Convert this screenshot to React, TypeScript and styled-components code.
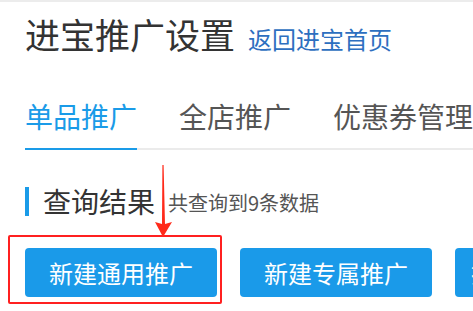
import styled, { createGlobalStyle } from 'styled-components'

const GlobalStyle = createGlobalStyle`
  html, body {
    margin: 0;
    padding: 0;
    background: #ffffff;
  }
  body {
    font-family: "Noto Sans CJK SC", "Noto Sans", sans-serif;
  }
`

const Page = styled.div`
  position: relative;
  width: 473px;
  height: 311px;
  overflow: hidden;
  border-top: 2px solid #ececec;
  box-sizing: border-box;
`

const Header = styled.div`
  align-items: baseline;
  display: flex;
  gap: 13px;
  padding: 12px 0 0 25px;
  white-space: nowrap;
`

const Title = styled.h1`
  color: #333333;
  font-size: 35px;
  font-weight: 400;
  line-height: 40px;
  margin: 0;
`

const BackLink = styled.a`
  color: #2d6fc0;
  cursor: pointer;
  font-size: 24px;
  line-height: 30px;
`

const Tabs = styled.div`
  border-bottom: 2px solid #ebebeb;
  display: flex;
  gap: 42px;
  margin: 45px 0 0 25px;
  white-space: nowrap;
`

const Tab = styled.div<{ $active?: boolean }>`
  border-bottom: 2px solid ${p => (p.$active ? '#1a9be8' : 'transparent')};
  color: ${p => (p.$active ? '#1a9be8' : '#555555')};
  cursor: pointer;
  font-size: 28px;
  line-height: 34px;
  margin-bottom: -2px;
  padding-bottom: 15px;
`

const Section = styled.div`
  align-items: center;
  display: flex;
  gap: 14px;
  margin: 35px 0 0 25px;
  white-space: nowrap;
`

const Marker = styled.span`
  align-self: stretch;
  background: #1a9be8;
  margin: 2px 0 1px;
  width: 4px;
`

const SectionTitle = styled.h2`
  color: #333333;
  font-size: 28px;
  font-weight: 400;
  line-height: 30px;
  margin: 0;
`

const Summary = styled.span`
  color: #555555;
  font-size: 20px;
  margin-left: -1px;
  padding-top: 3px;
`

const Actions = styled.div`
  display: flex;
  gap: 23px;
  margin: 31px 0 0 25px;
  white-space: nowrap;
`

const Highlight = styled.div`
  position: relative;

  &::after {
    border: 2px solid #ff2020;
    border-radius: 2px;
    box-sizing: border-box;
    content: '';
    height: 69px;
    left: -17px;
    pointer-events: none;
    position: absolute;
    top: -13px;
    width: 214px;
  }
`

const Button = styled.button<{ $compact?: boolean }>`
  background: #1a9ae9;
  border: none;
  border-radius: 4px;
  color: #ffffff;
  cursor: pointer;
  flex-shrink: 0;
  font-family: inherit;
  font-size: 24px;
  height: 49px;
  line-height: 49px;
  padding: 0 ${p => (p.$compact ? '16px' : '24px')};
`

const Arrow = styled.svg`
  left: 152px;
  pointer-events: none;
  position: absolute;
  top: 160px;
`

export default function App() {
  return (
    <>
      <GlobalStyle />
      <Page>
        <Header>
          <Title>进宝推广设置</Title>
          <BackLink>返回进宝首页</BackLink>
        </Header>

        <Tabs>
          <Tab $active>单品推广</Tab>
          <Tab>全店推广</Tab>
          <Tab>优惠券管理</Tab>
        </Tabs>

        <Section>
          <Marker />
          <SectionTitle>查询结果</SectionTitle>
          <Summary>共查询到9条数据</Summary>
        </Section>

        <Actions>
          <Highlight>
            <Button>新建通用推广</Button>
          </Highlight>
          <Button>新建专属推广</Button>
          <Button $compact>批量设置推广</Button>
        </Actions>

        <Arrow width="24" height="78" viewBox="0 0 24 78">
          <polygon points="10.4,3 11.6,3 13,62 20,60 11,75 3,60 10,62" fill="#ff2a1a" />
        </Arrow>
      </Page>
    </>
  )
}
